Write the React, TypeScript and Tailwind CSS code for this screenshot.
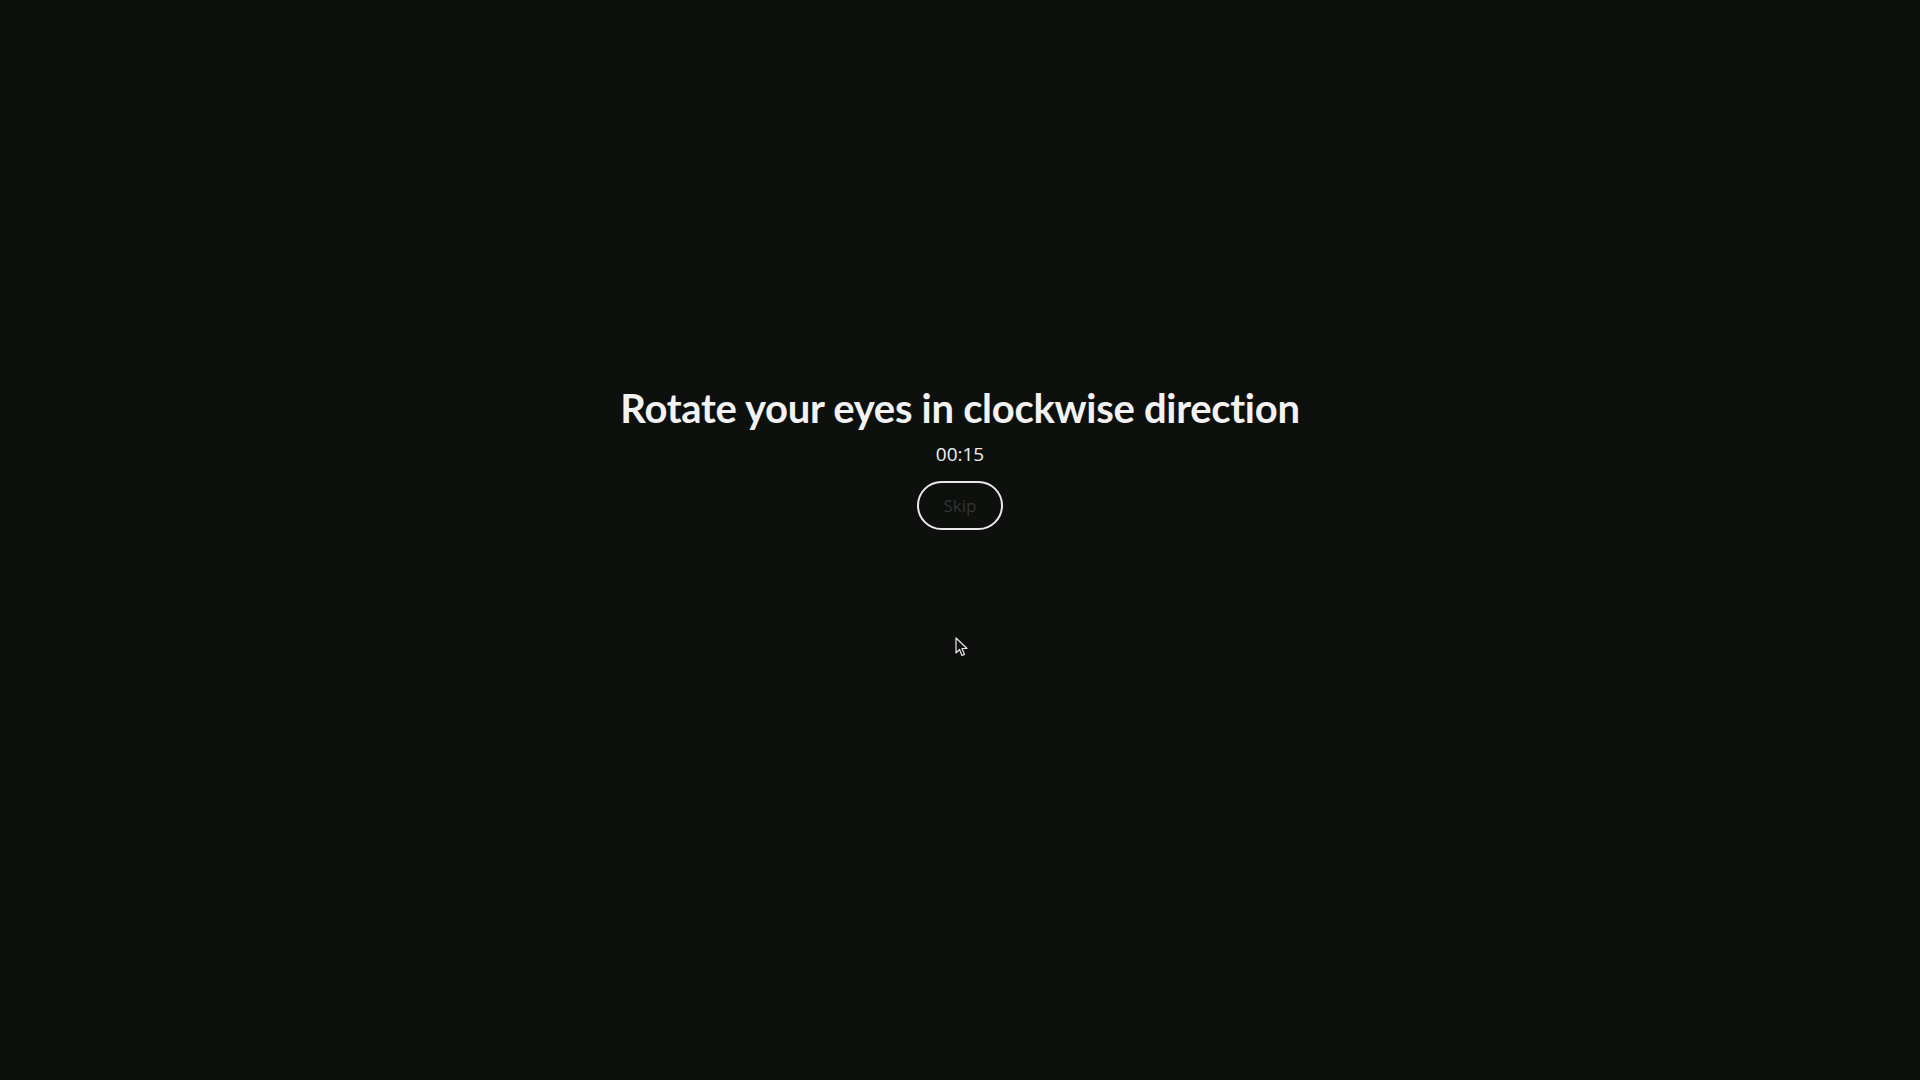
const App = () => {
    return (
        <div className="relative min-h-screen w-full bg-[#0e100e] flex flex-col items-center pt-[384px] font-['Open_Sans',sans-serif] text-white">
            <h1 className="font-['Lato',sans-serif] text-[40px] leading-[48px] font-bold tracking-[-0.3px] [font-variant-ligatures:none] text-[#f2f2f2]">Rotate your eyes in clockwise direction</h1>
            <div className="mt-[8px] text-[19px] leading-[28px] text-[#f0f0f0]">00:15</div>
            <button className="mt-[13px] w-[86px] h-[49px] rounded-full border-2 border-[#e8e8e8] text-[17px] text-[#333533] bg-transparent">
                Skip
            </button>
            {/* mouse pointer left in the shot */}
            <svg className="absolute left-[955px] top-[637px]" width="13" height="20" viewBox="0 0 13 20">
                <path d="M1 1 L1 16 L4.5 12.5 L7 18.5 L9.5 17.5 L7 11.5 L12 11.5 Z" fill="#0e100e" stroke="#e8e8e8" strokeWidth="1.2" strokeLinejoin="round" />
            </svg>
        </div>
    )
}

export default App
